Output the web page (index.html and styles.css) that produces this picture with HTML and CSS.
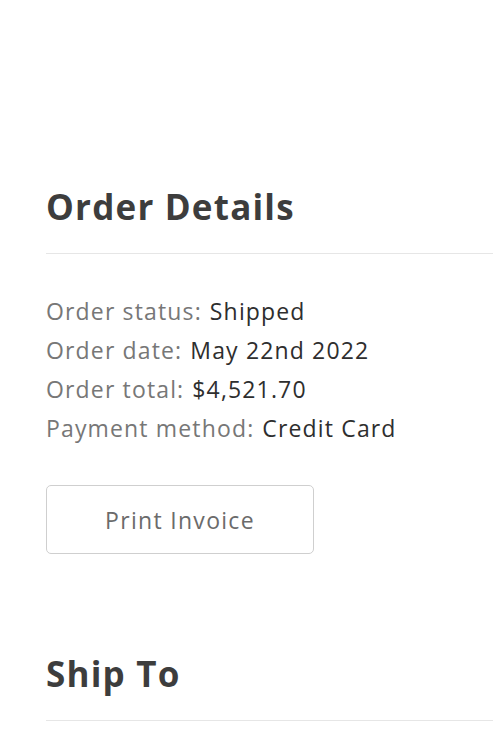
FILE: index.html
```html
<!DOCTYPE html>
<html lang="en">
<head>
<meta charset="utf-8">
<title>Order Details</title>
<link rel="stylesheet" href="styles.css">
</head>
<body>
<main class="page">
  <section class="block">
    <h2 class="block-title">Order Details</h2>
    <dl class="info">
      <div class="info-row"><dt>Order status:</dt><dd>Shipped</dd></div>
      <div class="info-row"><dt>Order date:</dt><dd>May 22nd 2022</dd></div>
      <div class="info-row"><dt>Order total:</dt><dd>$4,521.70</dd></div>
      <div class="info-row"><dt>Payment method:</dt><dd>Credit Card</dd></div>
    </dl>
    <button class="btn" type="button">Print Invoice</button>
  </section>
  <section class="block block-ship">
    <h2 class="block-title">Ship To</h2>
  </section>
</main>
</body>
</html>
```
FILE: styles.css
```css
html, body {
  margin: 0;
  padding: 0;
  background: #ffffff;
}
body {
  font-family: "Open Sans", "DejaVu Sans", sans-serif;
  color: #333333;
}
.page {
  padding: 186px 0 0 46px;
}
.block-title {
  margin: 0;
  padding-bottom: 25px;
  border-bottom: 1px solid #e6e6e6;
  font-family: "Open Sans", sans-serif;
  font-weight: 700;
  font-size: 35px;
  line-height: 42px;
  letter-spacing: 1.2px;
  color: #3d3d3d;
}
.info {
  margin: 38px 0 0;
  font-size: 23px;
  line-height: 39px;
  letter-spacing: 1.15px;
}
.info-row {
  display: flex;
  gap: 8px;
}
.info dt {
  color: #777777;
}
.info dd {
  margin: 0;
  color: #2e2e2e;
}
.btn {
  display: block;
  margin-top: 37px;
  width: 268px;
  height: 69px;
  border: 1px solid #cfcfcf;
  border-radius: 5px;
  background: #ffffff;
  font-family: "Open Sans", sans-serif;
  font-size: 23px;
  letter-spacing: 1.3px;
  color: #6b6b6b;
  cursor: pointer;
}
.block-ship {
  margin-top: 99px;
}
```
